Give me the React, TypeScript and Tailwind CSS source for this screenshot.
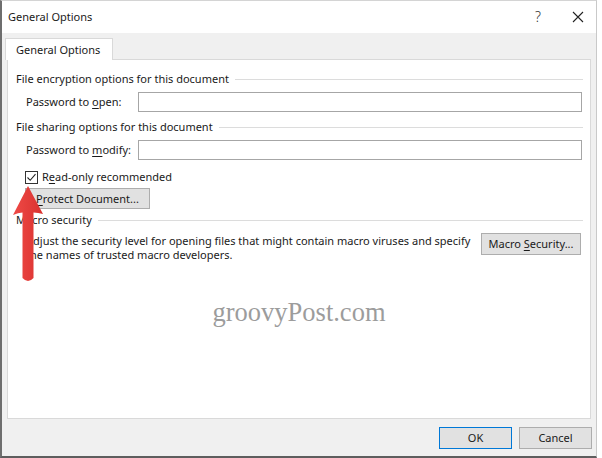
import React from 'react';

const font = { fontFamily: '"Noto Sans", "Open Sans", sans-serif' };

function Heading({ children }: { children: React.ReactNode }) {
    return (
        <div className="flex items-center h-4 pl-[8px] pr-[7px]">
            <span className="whitespace-nowrap">{children}</span>
            <div className="flex-1 h-px bg-[#dcdcdc] ml-[6px]" />
        </div>
    );
}

function Field({ label }: { label: React.ReactNode }) {
    return (
        <div className="flex items-center pl-[18px] pr-[8px] mt-[5px]">
            <span className="w-[112px] whitespace-nowrap">{label}</span>
            <div className="flex-1 h-[20px] border border-[#a6a6a6] bg-white" />
        </div>
    );
}

function Btn({ children, className = '' }: { children: React.ReactNode; className?: string }) {
    return (
        <div className={`flex items-center justify-center bg-[#e1e1e1] border border-[#adadad] ${className}`}>
            {children}
        </div>
    );
}

export default function App() {
    return (
        <div className="relative w-[602px] h-[458px] bg-white text-[11px] text-[#1a1a1a] leading-4" style={font}>
            <div className="flex flex-col w-[597px] h-[458px] border-l-2 border-b-2 border-r border-t border-l-[#6e6e6e] border-b-[#5e5e5e] border-r-[#c9c9c9] border-t-[#d4d4d4]">
                {/* Title bar */}
                <div className="flex items-center h-[32px] bg-white pl-[6px]">
                    <span className="flex-1">General Options</span>
                    <span className="w-[14px] text-[14px] font-light text-[#333] mr-[23px]">?</span>
                    <svg width="12" height="12" viewBox="0 0 12 12" className="mr-[12px]">
                        <path d="M1 1 L11 11 M11 1 L1 11" stroke="#222" strokeWidth="1.1" />
                    </svg>
                </div>

                {/* Body */}
                <div className="flex-1 flex flex-col bg-[#f0f0f0] pt-[5px] px-[5px]">
                    <div className="flex -ml-[2px]">
                        <div className="relative z-10 -mb-px h-[22px] w-[108px] bg-white border border-b-0 border-[#d9d9d9] flex items-center pl-[10px]">
                            General Options
                        </div>
                    </div>
                    <div className="flex-1 flex flex-col bg-white border border-[#d9d9d9] pt-[11px]">
                        <Heading>File encryption options for this document</Heading>
                        <Field label={<>Password to <u className="underline-offset-2">o</u>pen:</>} />
                        <div className="mt-[7px]">
                            <Heading>File sharing options for this document</Heading>
                        </div>
                        <Field label={<>Password to <u className="underline-offset-2">m</u>odify:</>} />

                        <div className="flex items-center mt-[9px] pl-[17px] gap-[4px]">
                            <div className="w-[13px] h-[13px] border border-[#333] bg-white flex items-center justify-center">
                                <svg width="11" height="11" viewBox="0 0 11 11">
                                    <path d="M1.5 5.5 L4.2 8.3 L9.5 2.2" fill="none" stroke="#222" strokeWidth="1.1" />
                                </svg>
                            </div>
                            <span>R<u className="underline-offset-2">e</u>ad-only recommended</span>
                        </div>
                        <div className="flex pl-[17px] mt-[3px]">
                            <Btn className="w-[125px] h-[21px]">
                                <span><u className="underline-offset-2">P</u>rotect Document...</span>
                            </Btn>
                        </div>

                        <div className="mt-[3px]">
                            <Heading>Macro security</Heading>
                        </div>
                        <div className="flex items-start pl-[18px] pr-[9px] mt-[5px]">
                            <p className="flex-1 leading-[13.5px] pt-[1px]">
                                Adjust the security level for opening files that might contain macro viruses and specify
                                <br />
                                the names of trusted macro developers.
                            </p>
                            <Btn className="w-[100px] h-[22px]">
                                <span>Macro <u className="underline-offset-2">S</u>ecurity...</span>
                            </Btn>
                        </div>

                        <div
                            className="mt-[35px] text-center text-[26.5px] leading-8 text-[#9c9c9c]"
                            style={{ fontFamily: '"Liberation Serif", serif' }}
                        >
                            groovyPost.com
                        </div>
                    </div>

                    {/* Buttons */}
                    <div className="flex justify-end gap-[7px] pt-[8px] pb-[7px] -mr-[1px]">
                        <Btn className="w-[73px] h-[22px] !border-[#0078d7]">OK</Btn>
                        <Btn className="w-[73px] h-[22px]">Cancel</Btn>
                    </div>
                </div>
            </div>

            {/* Red arrow */}
            <svg className="absolute left-[12px] top-[185px]" width="32" height="100" viewBox="0 0 32 100">
                <defs>
                    <linearGradient id="ar" x1="0" x2="1">
                        <stop offset="0" stopColor="#ef4a46" />
                        <stop offset="1" stopColor="#d9312f" />
                    </linearGradient>
                </defs>
                <path
                    d="M16 1 L31 29 Q26 27.5 21.5 27.5 L21.5 93 Q16 99 10.5 93 L10.5 27.5 Q6 27.5 1 30 Z"
                    fill="url(#ar)"
                />
            </svg>
        </div>
    );
}
